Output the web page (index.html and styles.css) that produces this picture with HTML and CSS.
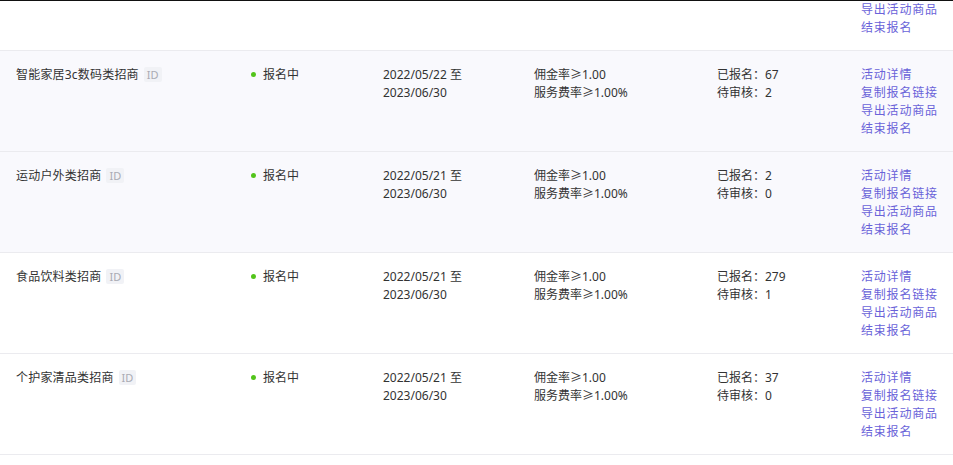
FILE: index.html
```html
<!DOCTYPE html>
<html lang="zh">
<head>
<meta charset="utf-8">
<link rel="stylesheet" href="styles.css">
</head>
<body>
<div class="topline"></div>
<div class="table">
  <div class="row partial">
    <div class="cell"></div>
    <div class="cell"></div>
    <div class="cell"></div>
    <div class="cell"></div>
    <div class="cell"></div>
    <div class="cell actions"><a>导出活动商品</a><a>结束报名</a></div>
  </div>
  <div class="row tint">
    <div class="cell name">智能家居3c数码类招商<span class="id">ID</span></div>
    <div class="cell status"><span class="dot"></span>报名中</div>
    <div class="cell">2022/05/22 至<br>2023/06/30</div>
    <div class="cell">佣金率≥1.00<br>服务费率≥1.00%</div>
    <div class="cell">已报名：67<br>待审核：2</div>
    <div class="cell actions"><a>活动详情</a><a>复制报名链接</a><a>导出活动商品</a><a>结束报名</a></div>
  </div>
  <div class="row tint">
    <div class="cell name">运动户外类招商<span class="id">ID</span></div>
    <div class="cell status"><span class="dot"></span>报名中</div>
    <div class="cell">2022/05/21 至<br>2023/06/30</div>
    <div class="cell">佣金率≥1.00<br>服务费率≥1.00%</div>
    <div class="cell">已报名：2<br>待审核：0</div>
    <div class="cell actions"><a>活动详情</a><a>复制报名链接</a><a>导出活动商品</a><a>结束报名</a></div>
  </div>
  <div class="row">
    <div class="cell name">食品饮料类招商<span class="id">ID</span></div>
    <div class="cell status"><span class="dot"></span>报名中</div>
    <div class="cell">2022/05/21 至<br>2023/06/30</div>
    <div class="cell">佣金率≥1.00<br>服务费率≥1.00%</div>
    <div class="cell">已报名：279<br>待审核：1</div>
    <div class="cell actions"><a>活动详情</a><a>复制报名链接</a><a>导出活动商品</a><a>结束报名</a></div>
  </div>
  <div class="row">
    <div class="cell name">个护家清品类招商<span class="id">ID</span></div>
    <div class="cell status"><span class="dot"></span>报名中</div>
    <div class="cell">2022/05/21 至<br>2023/06/30</div>
    <div class="cell">佣金率≥1.00<br>服务费率≥1.00%</div>
    <div class="cell">已报名：37<br>待审核：0</div>
    <div class="cell actions"><a>活动详情</a><a>复制报名链接</a><a>导出活动商品</a><a>结束报名</a></div>
  </div>
</div>
</body>
</html>
```
FILE: styles.css
```css
html, body {
  margin: 0;
  padding: 0;
  background: #fff;
}
body {
  font-family: "Noto Sans", "Noto Sans CJK SC", sans-serif;
  font-size: 12px;
  line-height: 18px;
  color: #333;
  height: 465px;
  overflow: hidden;
}
.topline {
  height: 1px;
  background: #111;
}
.row {
  display: grid;
  grid-template-columns: 235px 132px 151px 183px 144px 1fr;
  padding: 15px 0 13px 16px;
  border-bottom: 1px solid #ebebef;
  height: 72px;
}
.row.partial {
  padding-top: 0;
  padding-bottom: 13px;
  height: 36px;
}
.row.tint {
  background: #f9f9fd;
}
.cell {
  white-space: nowrap;
}
.name {
  letter-spacing: 0.2px;
}
.id {
  display: inline-block;
  margin-left: 5px;
  padding: 0 3px;
  background: #f1f2f6;
  color: #a9abb3;
  font-size: 11px;
  line-height: 15px;
  border-radius: 2px;
  letter-spacing: 0;
}
.status {
  display: flex;
  align-items: flex-start;
}
.dot {
  width: 5px;
  height: 5px;
  border-radius: 50%;
  background: #52c41a;
  margin: 6px 7px 0 0;
}
.actions {
  display: flex;
  flex-direction: column;
  letter-spacing: 0.8px;
}
.actions a {
  color: #6a63d9;
  cursor: pointer;
}
```
